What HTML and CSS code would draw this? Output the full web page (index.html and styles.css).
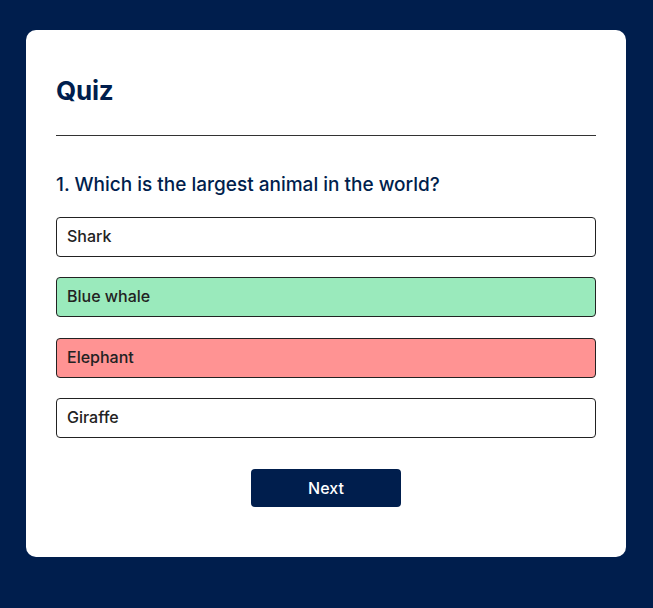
FILE: index.html
```html
<!DOCTYPE html>
<html lang="en">
<head>
<meta charset="utf-8">
<title>Quiz</title>
<link rel="stylesheet" href="styles.css">
</head>
<body>
  <main class="app">
    <h1 class="title">Quiz</h1>
    <div class="quiz">
      <h2 class="question">1. Which is the largest animal in the world?</h2>
      <div class="answers">
        <button class="answer">Shark</button>
        <button class="answer correct">Blue whale</button>
        <button class="answer incorrect">Elephant</button>
        <button class="answer">Giraffe</button>
      </div>
      <button class="next">Next</button>
    </div>
  </main>
</body>
</html>
```
FILE: styles.css
```css
* {
  box-sizing: border-box;
}

body {
  margin: 0;
  padding: 30px 1px 0 0;
  background: #001e4d;
  font-family: Inter, "Noto Sans", sans-serif;
}

.app {
  width: 600px;
  margin: 0 auto;
  background: #fff;
  border-radius: 10px;
  padding: 30px;
}

.title {
  margin: 0;
  padding: 13px 0 26px;
  font-size: 26px;
  line-height: 36px;
  font-weight: 700;
  color: #001e4d;
  border-bottom: 1px solid #333;
  letter-spacing: -0.2px;
}

.question {
  margin: 35px 0 18px;
  font-size: 19px;
  line-height: 28px;
  font-weight: 500;
  color: #001e4d;
}

.answers {
  display: flex;
  flex-direction: column;
  gap: 20.33px;
}

.answer {
  display: block;
  width: 100%;
  height: 40px;
  padding: 0 10px 2px;
  text-align: left;
  background: #fff;
  border: 1px solid #222;
  border-radius: 4px;
  font-family: inherit;
  font-size: 16px;
  font-weight: 500;
  color: #222;
}

.answer.correct {
  background: #9aeabc;
}

.answer.incorrect {
  background: #ff9393;
}

.next {
  display: block;
  width: 150px;
  height: 38px;
  margin: 31px auto 20px;
  background: #001e4d;
  color: #fff;
  border: 0;
  border-radius: 4px;
  font-family: inherit;
  font-size: 16px;
  font-weight: 500;
}
```
